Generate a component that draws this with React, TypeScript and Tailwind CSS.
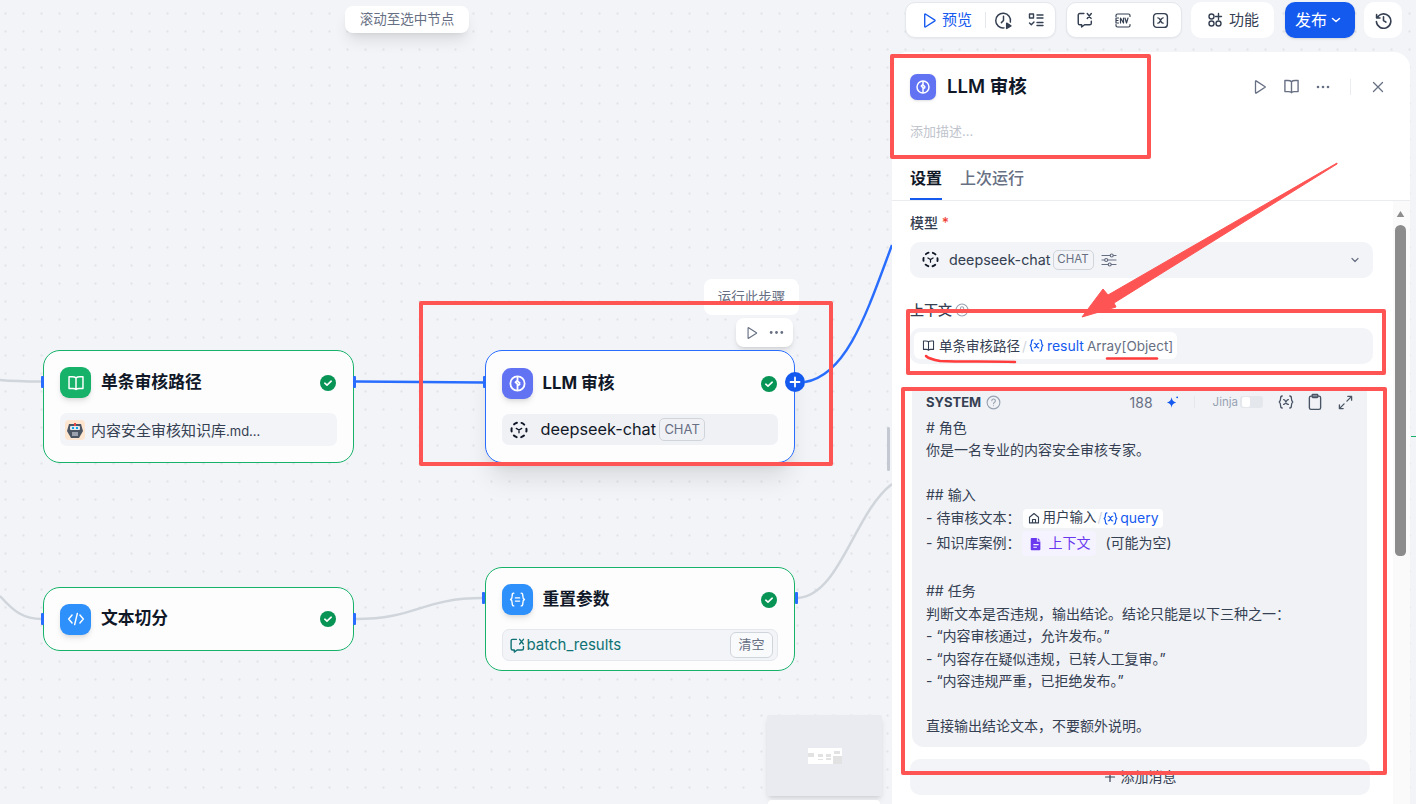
import type { ReactNode } from 'react'

const ic = 'shrink-0 fill-none stroke-current'

function PlayIcon({ className }: { className: string }) {
  return (
    <svg viewBox="0 0 16 16" className={`${ic} ${className}`} strokeWidth="1.3" strokeLinejoin="round">
      <path d="M3.500 2.200v11.600a.4.4 0 0 0 .6.3l9-5.800a.4.4 0 0 0 0-.6l-9-5.800a.4.4 0 0 0-.6.3Z" />
    </svg>
  )
}

function DotsIcon({ className }: { className: string }) {
  return (
    <svg viewBox="0 0 16 16" className={`shrink-0 fill-current ${className}`}>
      <circle cx="3" cy="8" r="1.300" />
      <circle cx="8" cy="8" r="1.300" />
      <circle cx="13" cy="8" r="1.300" />
    </svg>
  )
}

function BookIcon({ className }: { className: string }) {
  return (
    <svg viewBox="0 0 16 16" className={`${ic} ${className}`} strokeWidth="1.3" strokeLinejoin="round" strokeLinecap="round">
      <path d="M8 3.400C7.200 2.700 6 2.400 4.600 2.400H1.800v10.400h3.400c1.300 0 2.200.3 2.800 1 .6-.7 1.500-1 2.800-1h3.400V2.400h-2.800C10 2.400 8.800 2.700 8 3.400Zm0 0v10.400" />
    </svg>
  )
}

function BrainIcon({ className }: { className: string }) {
  return (
    <svg viewBox="0 0 16 16" className={`${ic} ${className}`} strokeWidth="1.5" strokeLinecap="round">
      <circle cx="8" cy="8" r="6" />
      <path d="M8 2.400v3L6.400 7l1.600 1.600v5M8 6l1.800 1.600M8 10l1.800-1.400" />
    </svg>
  )
}

function ModelIcon({ className }: { className: string }) {
  return (
    <svg viewBox="0 0 18 18" className={`${ic} ${className}`} strokeWidth="2" strokeLinecap="round">
      <circle cx="9" cy="9" r="7.500" strokeDasharray="3.200 4.650" strokeDashoffset="1.600" />
      <path d="M6.300 7.400 9 9l2.700-1.600M9 9v2.800" strokeWidth="1.300" />
    </svg>
  )
}

function CheckBadge() {
  return (
    <svg viewBox="0 0 16 16" className="h-[16px] w-[16px] shrink-0">
      <circle cx="8" cy="8" r="8" fill="#079455" />
      <path d="m4.800 8.200 2.200 2 4.200-4" fill="none" stroke="#fff" strokeWidth="1.600" strokeLinecap="round" strokeLinejoin="round" />
    </svg>
  )
}

function ConvVarIcon({ className }: { className: string }) {
  return (
    <svg viewBox="0 0 16 16" className={`${ic} ${className}`} strokeWidth="1.300" strokeLinecap="round" strokeLinejoin="round">
      <path d="M7 2.200H3.400c-.8 0-1.400.6-1.400 1.400v7.200c0 .8.6 1.400 1.400 1.400H5v2l2.600-2h4.600c.8 0 1.400-.6 1.400-1.400V9" />
      <path d="m10 2.200 3.400 4.400M13.600 2.200 10 6.600" />
    </svg>
  )
}

function VarIcon({ className }: { className: string }) {
  return (
    <svg viewBox="0 0 16 16" className={`${ic} ${className}`} strokeWidth="1.300" strokeLinecap="round" strokeLinejoin="round">
      <path d="M4.200 2C2.800 2 2.600 3 2.600 4.200c0 1.600-.2 3-1.400 3.800 1.200.8 1.400 2.200 1.400 3.800C2.600 13 2.800 14 4.200 14M11.800 2c1.400 0 1.600 1 1.600 2.200 0 1.600.2 3 1.400 3.800-1.200.8-1.400 2.200-1.400 3.800 0 1.200-.2 2.200-1.600 2.200" />
      <path d="M5.600 5.600c1 0 1.400.4 1.800 1.400l1.200 2.400c.4.800.8 1.200 1.800 1M10.400 5.600c-.8 0-1.200.4-1.800 1.200L7.200 9.400c-.4.600-.8 1-1.600 1" />
    </svg>
  )
}

function NodeCard({ className, children }: { className: string; children: ReactNode }) {
  return <div className={`absolute flex w-[310.500px] flex-col rounded-[17px] border bg-[#fdfdfe] px-[16px] ${className}`}>{children}</div>
}

function NodeHead({ icon, iconBg, title }: { icon: ReactNode; iconBg: string; title: string }) {
  return (
    <div className="flex h-[31px] items-center">
      <div className={`flex h-[31px] w-[31px] items-center justify-center rounded-[9px] text-white shadow-md ${iconBg}`}>{icon}</div>
      <div className="ml-[10px] flex-1 text-[16.800px] font-bold text-[#101828]">{title}</div>
      <div className="mr-[1px]">
        <CheckBadge />
      </div>
    </div>
  )
}

function Handle({ className }: { className: string }) {
  return <div className={`absolute h-[12px] w-[3px] rounded-[1px] bg-[#296dff] ${className}`} />
}

function ChatBadge({ className }: { className: string }) {
  return <span className={`inline-flex items-center justify-center rounded-[5px] border border-[#d0d5dc] text-[#676f83] ${className}`}>CHAT</span>
}

function RedBox({ className }: { className: string }) {
  return <div className={`absolute rounded-[2px] border-[4px] border-[#ff5454] ${className}`} />
}

function Canvas() {
  return (
    <div className="absolute inset-0">
      <svg className="absolute inset-0 h-full w-full" viewBox="0 0 1416 804" fill="none" strokeWidth="2.400">
        <path d="M0 380c15 1.500 26 1.500 42 1.500" stroke="#d0d5dc" />
        <path d="M356 381.500l128 1" stroke="#296dff" />
        <path d="M805 382c42-7 62-70 87-137" stroke="#296dff" />
        <path d="M0 596c14 16 24 23 42 23" stroke="#d0d5dc" />
        <path d="M356 619c60 0 66-21 127-21" stroke="#d0d5dc" />
        <path d="M798 598c42-3 56-85 94-114" stroke="#d0d5dc" />
      </svg>

      <div className="absolute left-[345px] top-[6px] flex h-[27px] w-[124px] items-center justify-center rounded-[8px] bg-white text-[13.500px] text-[#676f83] shadow-lg">
        滚动至选中节点
      </div>

      <NodeCard className="left-[43px] top-[350px] h-[113px] justify-center gap-[15px] border-[#17b26a]">
        <NodeHead title="单条审核路径" iconBg="bg-[#17b26a]" icon={<BookIcon className="h-[18px] w-[18px]" />} />
        <div className="flex h-[33px] items-center rounded-[7px] bg-[#f2f4f7] pl-[5px] text-[15px] text-[#354052]">
          <svg viewBox="0 0 20 20" className="h-[20px] w-[20px] shrink-0">
            <rect width="20" height="20" rx="4" fill="#fde5d0" />
            <path d="M4 4h12l2 7-4 7H6l-4-7Z" fill="#4b5563" />
            <rect x="5" y="6" width="10" height="4" rx="1" fill="#e5e7eb" />
            <rect x="7" y="7" width="2" height="2" fill="#0ea5e9" />
            <rect x="11" y="7" width="2" height="2" fill="#0ea5e9" />
            <rect x="9" y="3" width="2" height="3" fill="#ef4444" />
            <rect x="7" y="12" width="6" height="4" fill="#9ca3af" />
          </svg>
          <span className="ml-[6px] pt-[3px]">
            内容安全审核知识库<span className="text-[13px]">.md...</span>
          </span>
        </div>
      </NodeCard>
      <Handle className="left-[41px] top-[376px]" />
      <Handle className="left-[353px] top-[376px]" />

      <div className="absolute left-[704px] top-[279px] flex h-[36px] w-[95px] items-center justify-center rounded-[8px] bg-white text-[13.500px] text-[#676f83]">
        运行此步骤
      </div>
      <div className="absolute left-[736px] top-[318px] flex h-[29px] w-[57px] items-center justify-center gap-[9px] rounded-[8px] bg-white text-[#676f83] shadow-md">
        <PlayIcon className="h-[14px] w-[14px]" />
        <DotsIcon className="h-[17px] w-[17px]" />
      </div>

      <NodeCard className="left-[484.500px] top-[350px] h-[113px] justify-center gap-[15px] border-[#296dff] shadow-xl">
        <NodeHead title="LLM 审核" iconBg="bg-[#6172f3]" icon={<BrainIcon className="h-[19px] w-[19px]" />} />
        <div className="flex h-[31px] items-center rounded-[7px] bg-[#f0f1f5] pl-[8px] text-[16.300px] text-[#101828]">
          <ModelIcon className="h-[18px] w-[18px]" />
          <span className="ml-[13px]">deepseek-chat</span>
          <ChatBadge className="ml-[3px] h-[23px] w-[46px] text-[13px]" />
        </div>
      </NodeCard>
      <Handle className="left-[483px] top-[376px]" />
      <div className="absolute left-[785px] top-[372px] flex h-[20px] w-[20px] items-center justify-center rounded-full bg-[#155aef] text-white">
        <svg viewBox="0 0 12 12" className="h-[12px] w-[12px] fill-none stroke-current" strokeWidth="1.800" strokeLinecap="round">
          <path d="M6 1.500v9M1.500 6h9" />
        </svg>
      </div>

      <NodeCard className="left-[43px] top-[587px] h-[64px] justify-center border-[#17b26a]">
        <NodeHead
          title="文本切分"
          iconBg="bg-[#2e90fa]"
          icon={
            <svg viewBox="0 0 16 16" className="h-[18px] w-[18px] fill-none stroke-current" strokeWidth="1.300" strokeLinecap="round" strokeLinejoin="round">
              <path d="M4.500 4.500 1.500 8l3 3.500M11.500 4.500l3 3.500-3 3.500M9.200 3 6.800 13" />
            </svg>
          }
        />
      </NodeCard>
      <Handle className="left-[41px] top-[613px]" />
      <Handle className="left-[353px] top-[613px]" />

      <NodeCard className="left-[484.500px] top-[567px] h-[104px] gap-[14px] border-[#17b26a] pt-[16px]">
        <NodeHead
          title="重置参数"
          iconBg="bg-[#2e90fa]"
          icon={
            <svg viewBox="0 0 16 16" className="h-[17px] w-[17px] fill-none stroke-current" strokeWidth="1.300" strokeLinecap="round" strokeLinejoin="round">
              <path d="M4.500 2C3 2 3 3 3 4.500c0 2-.3 3-1.500 3.500C2.700 8.500 3 9.500 3 11.500 3 13 3 14 4.500 14M11.500 2C13 2 13 3 13 4.500c0 2 .3 3 1.500 3.500-1.200.5-1.500 1.500-1.500 3.500 0 1.500 0 2.500-1.500 2.500M6 6.500h4M6 9.500h4" />
            </svg>
          }
        />
        <div className="flex h-[32px] items-center rounded-[7px] border border-[#e4e7ec] bg-[#f2f4f7] pl-[6px] pr-[4px] text-[15px] text-[#0f7173]">
          <ConvVarIcon className="h-[17px] w-[17px]" />
          <span className="ml-[1px] flex-1">batch_results</span>
          <span className="flex h-[26px] w-[43px] items-center justify-center rounded-[6px] border border-[#d0d5dc] bg-[#f9fafb] text-[13px] text-[#676f83]">清空</span>
        </div>
      </NodeCard>
      <Handle className="left-[482px] top-[592px]" />
      <Handle className="left-[795px] top-[592px]" />

      <div className="absolute left-[887px] top-[427px] h-[44px] w-[3px] rounded-full bg-[#c4c8d0]" />

      <div className="absolute left-[767px] top-[715px] flex h-[81px] w-[115px] items-center justify-center rounded-[2px] bg-[#e9ebf0] shadow-md">
        <svg viewBox="0 0 34 16" className="h-[16px] w-[34px]">
          <rect width="34" height="16" fill="#fff" />
          <rect x="0" y="5" width="6" height="4" fill="#e2e2e2" />
          <rect x="10" y="6" width="5" height="3" fill="#e2e2e2" />
          <rect x="10" y="11" width="5" height="1" fill="#e2e2e2" />
          <rect x="18" y="6" width="5" height="3" fill="#e2e2e2" />
          <rect x="18" y="10" width="5" height="2" fill="#e2e2e2" />
          <rect x="26" y="3" width="6" height="3" fill="#e2e2e2" />
          <rect x="25" y="8" width="9" height="8" fill="#e2e2e2" />
        </svg>
      </div>
      <div className="absolute left-[768px] top-[800px] h-[4px] w-[112px] rounded-t-[6px] bg-white" />
    </div>
  )
}

function TopBar() {
  const box = 'flex h-[36px] items-center rounded-[10px]'
  return (
    <div className="flex items-center text-[15px] text-[#354052]">
      <div className={`${box} w-[151px] border border-[#e4e7ec] bg-white shadow-xs`}>
        <PlayIcon className="ml-[15px] h-[17px] w-[17px] text-[#155aef]" />
        <span className="ml-[4px] text-[#155aef]">预览</span>
        <div className="ml-[13px] h-[16px] w-px bg-[#e4e7ec]" />
        <svg viewBox="0 0 18 18" className={`${ic} ml-[8px] h-[19px] w-[19px]`} strokeWidth="1.400" strokeLinecap="round" strokeLinejoin="round">
          <path d="M15.500 10.500A7 7 0 1 0 9.500 16M9 5v4l-2 2" />
          <path d="m12 11.500 4 2.500-4 2.500Z" fill="currentColor" />
        </svg>
        <svg viewBox="0 0 16 16" className={`${ic} ml-[15px] h-[16px] w-[16px]`} strokeWidth="1.400" strokeLinecap="round" strokeLinejoin="round">
          <rect x="1.500" y="2" width="4" height="4" />
          <path d="M9 3h6M9 6h6M9 10.500h6M9 13.500h6M1.500 11l1.800 1.800L6 10" />
        </svg>
      </div>
      <div className={`${box} ml-[10px] w-[116px] gap-[20px] border border-[#e4e7ec] bg-white pl-[10px] shadow-xs`}>
        <ConvVarIcon className="ml-[-1px] h-[18px] w-[18px]" />
        <svg viewBox="0 0 18 16" className={`${ic} h-[17px] w-[18px]`} strokeWidth="1.200" strokeLinecap="round" strokeLinejoin="round">
          <path d="M2 4V3a1.500 1.500 0 0 1 1.500-1.500h11A1.500 1.500 0 0 1 16 3v1M2 12v1a1.500 1.500 0 0 0 1.500 1.500h11A1.500 1.500 0 0 0 16 13v-1" />
          <path d="M4.500 5.500h-2.500v5h2.500M2 8h2M6.500 10.500v-5l3 5v-5M11 5.500l1.500 5 1.500-5" />
        </svg>
        <svg viewBox="0 0 16 16" className={`${ic} h-[17px] w-[17px]`} strokeWidth="1.300" strokeLinecap="round" strokeLinejoin="round">
          <rect x="1.500" y="1.500" width="13" height="13" rx="3" />
          <path d="M5.500 5.500c1 0 1.300.3 1.800 1.200l1.400 2.600c.4.800.8 1.200 1.800 1.200M10.500 5.500c-.8 0-1.200.3-1.800 1.200L7.300 9.300c-.4.800-.8 1.200-1.800 1.200" />
        </svg>
      </div>
      <div className={`${box} ml-[9px] w-[83px] bg-white pl-[16px]`}>
        <svg viewBox="0 0 16 16" className={`${ic} h-[16px] w-[16px]`} strokeWidth="1.400" strokeLinecap="round">
          <circle cx="4.500" cy="4.500" r="2.500" />
          <circle cx="4.500" cy="11.500" r="2.500" />
          <circle cx="11.500" cy="11.500" r="2.500" />
          <path d="M11.500 1.500v6M8.500 4.500h6" />
        </svg>
        <span className="ml-[6px]">功能</span>
      </div>
      <div className={`${box} ml-[11px] w-[70px] bg-[#155aef] pl-[10px] text-white shadow-sm`}>
        <span className="text-[16px]">发布</span>
        <svg viewBox="0 0 12 12" className={`${ic} ml-[3px] h-[12px] w-[12px]`} strokeWidth="1.500" strokeLinecap="round" strokeLinejoin="round">
          <path d="m2.500 4.500 3.500 3 3.500-3" />
        </svg>
      </div>
      <div className={`${box} ml-[9px] w-[38px] justify-center bg-white`}>
        <svg viewBox="0 0 16 16" className={`${ic} h-[17px] w-[17px]`} strokeWidth="1.500" strokeLinecap="round" strokeLinejoin="round">
          <path d="M1.500 2.500v3.200h3.200M2 5.500A6.800 6.800 0 1 1 1.300 9M8 4.500V8l2.300 1.500" />
        </svg>
      </div>
    </div>
  )
}

const promptLines = ['# 角色', '你是一名专业的内容安全审核专家。', '', '## 输入']
const promptTail = [
  '',
  '## 任务',
  '判断文本是否违规，输出结论。结论只能是以下三种之一：',
  '- “内容审核通过，允许发布。”',
  '- “内容存在疑似违规，已转人工复审。”',
  '- “内容违规严重，已拒绝发布。”',
  '',
  '直接输出结论文本，不要额外说明。',
]

function PromptCard() {
  return (
    <div className="ml-[2px] mt-[24px] w-[455px] rounded-b-[12px] bg-[#f0f2f6] px-[14px] pb-[9px] text-[14px] text-[#354052]">
      <div className="flex h-[29px] items-center">
        <span className="text-[13px] font-bold text-[#354052]">SYSTEM</span>
        <svg viewBox="0 0 16 16" className={`${ic} ml-[5px] h-[15px] w-[15px] text-[#98a2b2]`} strokeWidth="1.200" strokeLinecap="round">
          <circle cx="8" cy="8" r="6.800" />
          <path d="M6.200 6.200a1.900 1.900 0 1 1 2.700 1.700c-.6.300-.9.700-.9 1.300M8 11.400v.1" />
        </svg>
        <span className="ml-auto text-[14px] text-[#676f83]">188</span>
        <svg viewBox="0 0 16 16" className="ml-[12px] h-[15px] w-[15px] fill-[#155aef]">
          <path d="M7 2.500c.6 3.400 1.700 4.700 5 5.500-3.300.8-4.400 2.100-5 5.500-.6-3.400-1.700-4.700-5-5.500 3.300-.8 4.400-2.100 5-5.500Z" />
          <circle cx="13" cy="2.500" r="1" />
        </svg>
        <div className="ml-[14px] h-[12px] w-px bg-[#e4e7ec]" />
        <span className="ml-[18px] text-[11.500px] text-[#98a2b2]">Jinja</span>
        <div className="ml-[2px] flex h-[12px] w-[23px] items-center rounded-[3px] bg-[#e4e7ec] pl-[2px]">
          <div className="h-[10px] w-[8px] rounded-[2px] bg-white" />
        </div>
        <VarIcon className="ml-[15px] h-[16px] w-[16px] text-[#495464]" />
        <svg viewBox="0 0 16 16" className={`${ic} ml-[12px] h-[18px] w-[18px] text-[#495464]`} strokeWidth="1.200" strokeLinejoin="round">
          <rect x="3" y="2.800" width="10" height="11.700" rx="1.500" />
          <rect x="5.500" y="1.300" width="5" height="2.700" rx=".6" />
        </svg>
        <svg viewBox="0 0 16 16" className={`${ic} ml-[14px] h-[15px] w-[15px] text-[#495464]`} strokeWidth="1.400" strokeLinecap="round" strokeLinejoin="round">
          <path d="M9.500 6.500 14.500 1.500M10.500 1.500h4v4M6.500 9.500l-5 5M5.500 14.500h-4v-4" />
        </svg>
      </div>
      <div className="leading-[22.500px]">
        {promptLines.map((line, i) => (
          <div key={i} className="h-[22.500px]">{line}</div>
        ))}
        <div className="flex h-[22.500px] items-center">
          <span>- 待审核文本：</span>
          <span className="ml-[3px] flex h-[19px] w-[140px] items-center rounded-[4px] bg-white pl-[5px] text-[13.500px] leading-none">
            <svg viewBox="0 0 16 16" className={`${ic} h-[12px] w-[12px]`} strokeWidth="1.500" strokeLinejoin="round">
              <path d="M2 7 8 2l6 5v7.500H2Z" />
              <path d="M6 14.500V10h4v4.500" />
            </svg>
            <span className="ml-[2px] whitespace-nowrap">用户输入</span>
            <span className="mx-[1px] text-[#d0d5dc]">/</span>
            <VarIcon className="h-[15px] w-[15px] text-[#155aef]" />
            <span className="ml-[2px] text-[14px] text-[#155aef]">query</span>
          </span>
        </div>
        <div className="flex h-[28.500px] items-center">
          <span>- 知识库案例：</span>
          <span className="ml-[2px] flex h-[25px] w-[74px] items-center rounded-[4px] bg-[#f5f3ff] pl-[7px] text-[#6938ef]">
            <svg viewBox="0 0 16 16" className="h-[14px] w-[14px] shrink-0 fill-[#6938ef]">
              <path d="M3 1h6v4h4v9a1 1 0 0 1-1 1H3a1 1 0 0 1-1-1V2a1 1 0 0 1 1-1Zm7 0 3 3h-3ZM5 8v1.300h6V8Zm0 3v1.300h4V11Z" />
            </svg>
            <span className="ml-[5px]">上下文</span>
          </span>
          <span className="ml-[9px]">(可能为空)</span>
        </div>
        {promptTail.map((line, i) => (
          <div key={i} className="h-[22.500px]">{line}</div>
        ))}
      </div>
    </div>
  )
}

function SidePanel() {
  return (
    <div className="mt-[14px] flex h-[752px] w-[518px] flex-col overflow-hidden rounded-t-[16px] bg-white">
      <div className="flex items-center pl-[18px] pr-[26px] pt-[21px]">
        <div className="flex h-[26px] w-[26px] items-center justify-center rounded-[7px] bg-[#6172f3] text-white shadow-sm">
          <BrainIcon className="h-[16px] w-[16px]" />
        </div>
        <span className="ml-[11px] text-[18.500px] font-semibold text-[#101828]">LLM 审核</span>
        <div className="ml-auto flex items-center text-[#676f83]">
          <PlayIcon className="h-[16px] w-[16px]" />
          <BookIcon className="ml-[14.500px] h-[17px] w-[17px]" />
          <DotsIcon className="ml-[15.500px] h-[16px] w-[16px]" />
          <div className="ml-[19px] h-[16px] w-px bg-[#eaecf0]" />
          <svg viewBox="0 0 12 12" className={`${ic} ml-[21px] h-[12px] w-[12px]`} strokeWidth="1.300" strokeLinecap="round">
            <path d="m1.500 1.500 9 9M10.500 1.500l-9 9" />
          </svg>
        </div>
      </div>
      <div className="pl-[18px] pt-[21px] text-[13px] leading-[18px] text-[#c0c4cc]">添加描述...</div>
      <div className="flex gap-[18px] border-b border-[#eaecf0] pl-[18px] pt-[26px] text-[16px]">
        <div className="border-b-2 border-[#155aef] pb-[8px] font-semibold text-[#101828]">设置</div>
        <div className="pb-[8px] font-medium text-[#676f83]">上次运行</div>
      </div>
      <div className="flex min-h-0 flex-1">
        <div className="min-w-0 flex-1 overflow-hidden pl-[18px]">
          <div className="mt-[12px] text-[14px] font-medium leading-[20px] text-[#354052]">
            模型 <span className="text-[#f04438]">*</span>
          </div>
          <div className="mt-[9px] flex h-[36px] w-[463px] items-center rounded-[10px] bg-[#f2f4f7] pl-[12px] pr-[12px] text-[14.300px] text-[#354052]">
            <ModelIcon className="h-[17px] w-[17px] text-[#101828]" />
            <span className="ml-[10px]">deepseek-chat</span>
            <ChatBadge className="ml-[2px] h-[20px] w-[41px] text-[11.500px]" />
            <svg viewBox="0 0 16 16" className={`${ic} ml-[7px] h-[16px] w-[16px] text-[#676f83]`} strokeWidth="1.200" strokeLinecap="round">
              <path d="M1 3.500h8M12.500 3.500H15M1 8h2.500M7 8h8M1 12.500h6M10.500 12.500H15" />
              <circle cx="10.700" cy="3.500" r="1.500" />
              <circle cx="5.200" cy="8" r="1.500" />
              <circle cx="8.700" cy="12.500" r="1.500" />
            </svg>
            <svg viewBox="0 0 12 12" className={`${ic} ml-auto h-[12px] w-[12px] text-[#676f83]`} strokeWidth="1.200" strokeLinecap="round" strokeLinejoin="round">
              <path d="m3 4.500 3 3 3-3" />
            </svg>
          </div>
          <div className="mt-[22px] flex h-[20px] items-center text-[14px] font-medium text-[#354052]">
            上下文
            <svg viewBox="0 0 16 16" className={`${ic} ml-[3px] h-[14px] w-[14px] text-[#98a2b2]`} strokeWidth="1.200" strokeLinecap="round">
              <circle cx="8" cy="8" r="6.800" />
              <path d="M6.200 6.200a1.900 1.900 0 1 1 2.700 1.700c-.6.300-.9.700-.9 1.300M8 11.400v.1" />
            </svg>
          </div>
          <div className="mt-[8px] flex h-[36px] w-[463px] items-center rounded-[10px] bg-[#f2f4f7] pl-[4px]">
            <div className="flex h-[27px] w-[263px] items-center whitespace-nowrap rounded-[6px] bg-white pl-[8px] text-[13.500px] text-[#354052]">
              <BookIcon className="h-[13px] w-[13px]" />
              <span className="ml-[4px]">单条审核路径</span>
              <span className="mx-[2px] text-[#d0d5dc]">/</span>
              <VarIcon className="h-[15px] w-[15px] text-[#155aef]" />
              <span className="ml-[3px] text-[14px] text-[#155aef]">result</span>
              <span className="ml-[3px] text-[#676f83]">Array[Object]</span>
            </div>
          </div>
          <PromptCard />
          <div className="mt-[12px] flex h-[36px] w-[460px] items-center justify-center rounded-[10px] bg-[#f2f4f7] text-[14px] text-[#354052]">
            <svg viewBox="0 0 12 12" className={`${ic} h-[12px] w-[12px]`} strokeWidth="1.200" strokeLinecap="round">
              <path d="M6 1.500v9M1.500 6h9" />
            </svg>
            <span className="ml-[5px]">添加消息</span>
          </div>
        </div>
        <div className="flex w-[17px] flex-col items-center bg-[#fafafa] pr-[2px]">
          <svg viewBox="0 0 10 8" className="mt-[10px] h-[6px] w-[9px] fill-[#8c8c8c]">
            <path d="M5 0 10 8H0Z" />
          </svg>
          <div className="mt-[8px] h-[331px] w-[11px] rounded-t-[6px] rounded-b-[5px] bg-[#8c8c8c]" />
        </div>
      </div>
    </div>
  )
}

function Marks() {
  return (
    <>
      <RedBox className="left-[890px] top-[54px] h-[105px] w-[261px]" />
      <RedBox className="left-[906px] top-[309px] h-[66px] w-[480px]" />
      <RedBox className="left-[901px] top-[387px] h-[388px] w-[486px]" />
      <RedBox className="left-[419px] top-[301px] h-[165px] w-[414px]" />
      <svg className="absolute inset-0 h-full w-full" viewBox="0 0 1416 804" fill="none">
        <path d="M1337 163 1108 295 1103 289 1082 317 1116 307 1114 303 1337 164Z" fill="#ff5454" stroke="#ff5454" strokeWidth="1" strokeLinejoin="round" />
        <path d="M926 356c3 3 8 4 14 5 25 1 50 0 75 1" stroke="#ff3b3b" strokeWidth="2.500" strokeLinecap="round" />
        <path d="M1107 358.500h50" stroke="#ff3b3b" strokeWidth="2.500" strokeLinecap="round" />
      </svg>
    </>
  )
}

export default function App() {
  return (
    <div className="relative h-[804px] w-[1416px] overflow-hidden bg-[#f2f4f7] bg-[radial-gradient(#e0e2e8_1px,transparent_1.200px)] bg-[size:18px_18px] bg-[position:-3.500px_4.500px] font-[Inter,'Noto_Sans_CJK_SC',sans-serif]">
      <Canvas />
      <div className="absolute inset-y-0 right-[6px] flex flex-col items-end pt-[2px]">
        <div className="pr-[8px]">
          <TopBar />
        </div>
        <SidePanel />
      </div>
      <div className="absolute right-0 top-[52px] h-[752px] w-[2px] bg-[#f2f4f7]" />
      <div className="absolute right-0 top-[436px] h-px w-[5px] bg-[#17b26a]" />
      <Marks />
    </div>
  )
}
